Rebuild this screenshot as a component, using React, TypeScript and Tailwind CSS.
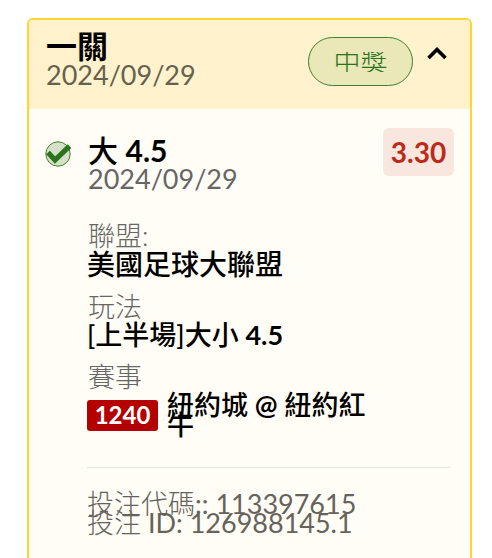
import type { ReactNode } from "react";

function WonIcon() {
  return (
    <svg viewBox="0 0 26 26" className="size-[26px] shrink-0" role="img" aria-label="中獎">
      <circle cx="13" cy="13" r="12.2" fill="#d5e0c7" stroke="#3c8030" strokeWidth="1" />
      <path d="M3 11.5L10 19L24.5 5" fill="none" stroke="#2b731d" strokeWidth="5.2" />
    </svg>
  );
}

function Detail({ label, children }: { label: string; children: ReactNode }) {
  return (
    <div>
      <dt className="pl-px font-light leading-7 text-[#666]">{label}</dt>
      <dd className="font-medium leading-7 text-black">{children}</dd>
    </div>
  );
}

export default function App() {
  return (
    <main className="min-h-screen bg-white pl-[27px] pr-5 pt-[18px] font-[Lato,'Noto_Sans_CJK_TC',sans-serif] text-[27px]">
      <article className="h-[calc(100vh-18px)] overflow-hidden rounded-t-md border-2 border-b-0 border-[#ffd52e] bg-[#fffdf5]">
        <header className="flex h-[89px] items-start justify-between bg-[#fff2cc] pl-[17px] pr-[21px] pt-3">
          <div>
            <h1 className="text-[31px] font-bold leading-7 text-black">一關</h1>
            <time className="block leading-[29px] text-[#66614f]">2024/09/29</time>
          </div>
          <div className="flex items-start gap-3 pt-[5px]">
            <span className="flex h-[49px] w-[105px] items-center justify-center rounded-full border border-[#3c8030] bg-[#eae7b8] font-light text-[#2b731d]">
              <span className="h-5 overflow-hidden leading-5">中獎</span>
            </span>
            <button type="button" aria-label="收合" className="flex h-8 w-6 items-center justify-center">
              <svg viewBox="0 0 20 14" className="h-[14px] w-5" fill="none" stroke="#000" strokeWidth="3.6">
                <path d="M1.5 12L10 3.5L18.5 12" />
              </svg>
            </button>
          </div>
        </header>

        <section className="flex gap-4 pl-4 pr-5 pt-[19px]">
          <div className="pt-[13px]">
            <WonIcon />
          </div>
          <div className="min-w-0 flex-1">
            <div className="-mr-1 flex justify-between">
              <div className="pl-px pt-2">
                <h2 className="text-[30px] font-medium leading-7 text-black">
                  大 <span className="font-bold">4.5</span>
                </h2>
                <time className="block leading-[30px] text-[#666]">2024/09/29</time>
              </div>
              <strong className="flex h-12 w-[71px] items-center justify-center rounded-md bg-[#f8e6df] text-[28px] font-bold text-[#bc2a1a]">
                3.30
              </strong>
            </div>

            <dl className="mt-7 flex flex-col gap-[14px]">
              <Detail label="聯盟:">
                <span className="text-[28px]">美國足球大聯盟</span>
              </Detail>
              <Detail label="玩法">
                [上半場]大小 <span className="font-bold">4.5</span>
              </Detail>
              <Detail label="賽事">
                <div className="flex items-center gap-[9px] pt-1">
                  <span className="flex h-[31px] w-[71px] shrink-0 items-center justify-center rounded-[3px] bg-[#b50000] text-2xl font-bold text-white">
                    1240
                  </span>
                  <span className="w-[210px] leading-5">
                    紐約城 <span className="font-bold">@</span> 紐約紅牛
                  </span>
                </div>
              </Detail>
            </dl>

            <footer className="mt-8 border-t border-[#e5e3dc] pt-[26px] leading-[19px] text-[#66635c]">
              <p>
                <span className="font-light">投注代碼</span>:: 113397615
              </p>
              <p>
                <span className="font-light">投注</span> ID: 126988145.1
              </p>
            </footer>
          </div>
        </section>
      </article>
    </main>
  );
}
